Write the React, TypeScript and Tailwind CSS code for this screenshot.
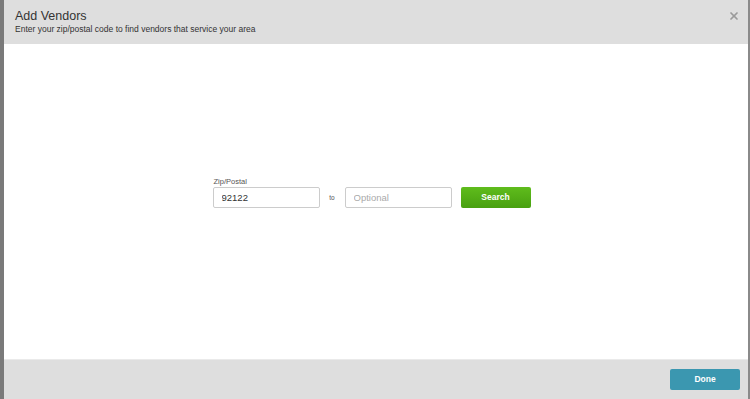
import { X } from "lucide-react";

export default function App() {
  return (
    <div className="flex h-[399px] w-[750px] bg-[#6b6b6b] font-['Liberation_Sans',Arial,sans-serif]">
      <div className="w-[4px] shrink-0 bg-[#7a7a7a]" />
      <div className="flex h-[399px] flex-1 flex-col bg-white">
        <div className="flex h-[44px] shrink-0 items-start justify-between bg-[#dedede] pl-[11px] pr-[8px] pt-[9px]">
          <div>
            <div className="text-[12.5px] leading-[15px] text-[#333]">Add Vendors</div>
            <div className="text-[8.5px] leading-[11px] text-[#333]">
              Enter your zip/postal code to find vendors that service your area
            </div>
          </div>
          <X className="mt-[1px] h-[12px] w-[12px] text-[#9a9a9a]" strokeWidth={3.5} />
        </div>
        <div className="flex flex-1 items-center justify-center pb-[18px] pl-[1px] pr-[10px]">
          <div className="flex flex-col">
            <div className="mb-[1px] pl-[1px] text-[7.5px] leading-[9px] text-[#555]">Zip/Postal</div>
            <div className="flex items-center">
              <input
                defaultValue="92122"
                className="h-[21px] w-[107px] rounded-[2px] border border-[#ccc] px-[8px] text-[9.5px] text-[#333] outline-none"
              />
              <span className="w-[25px] text-center text-[6.5px] text-[#555]">to</span>
              <input
                placeholder="Optional"
                className="h-[21px] w-[107px] rounded-[2px] border border-[#ccc] px-[8px] text-[9.5px] text-[#333] outline-none placeholder:text-[#aaa]"
              />
              <button className="ml-[9px] h-[21px] w-[70px] rounded-[2px] bg-gradient-to-b from-[#5fbc1c] to-[#48a010] text-[8.5px] font-bold text-white">
                Search
              </button>
            </div>
          </div>
        </div>
        <div className="flex h-[40px] shrink-0 items-center justify-end border-t border-[#eaeaea] bg-[#dedede] pr-[8px]">
          <button className="h-[21px] w-[70px] rounded-[2px] bg-[#3b97b0] text-[8.5px] font-bold text-white">
            Done
          </button>
        </div>
      </div>
      <div className="w-[2px] shrink-0 bg-[#8a8a8a]" />
    </div>
  );
}
